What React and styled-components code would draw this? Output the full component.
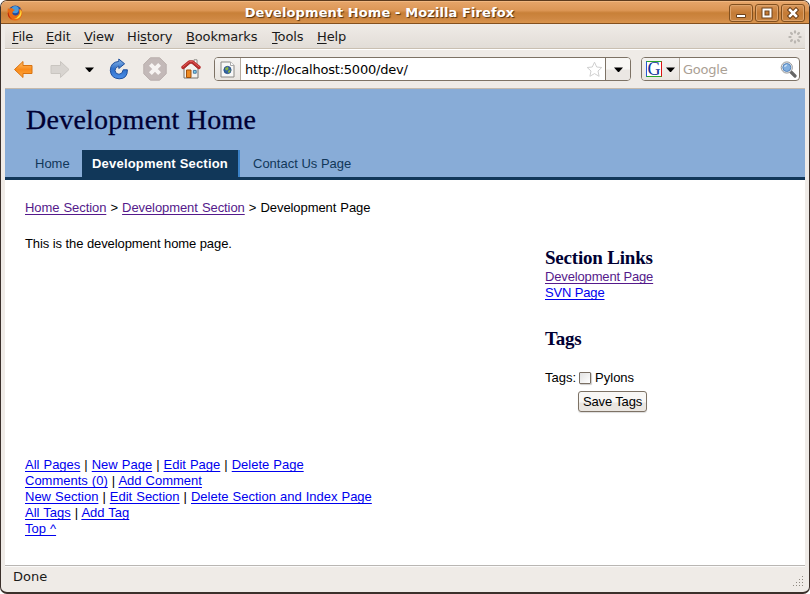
import React from "react";
import styled, { createGlobalStyle, css } from "styled-components";

const ui = '"DejaVu Sans", sans-serif';

const Global = createGlobalStyle`
  *, *::before, *::after { box-sizing: border-box; }
  body { margin: 0; background: #fff; }
`;

const Frame = styled.div`
  width: 810px;
  height: 594px;
  display: flex;
  flex-direction: column;
  overflow: hidden;
  border: 1px solid #3b302b;
  border-top-color: #5d3b1d;
  border-bottom-width: 2px;
  border-radius: 7px;
  background: #efebe7;
  font: 13px/16px ${ui};
  letter-spacing: -0.15px;
  color: #1a1a1a;
`;

const TitleBar = styled.header`
  flex: none;
  height: 23px;
  display: flex;
  align-items: center;
  padding: 0 4px 0 6px;
  border-top: 1px solid #f1b780;
  border-bottom: 1px solid #83501f;
  background: linear-gradient(#e5a468 0, #dc9655 40%, #c88038 52%, #cf8843 80%, #d9944d 100%);
`;

const Title = styled.h1`
  flex: 1;
  margin: 0;
  padding-left: 9px;
  text-align: center;
  font: bold 13px/20px ${ui};
  letter-spacing: 0.1px;
  color: #fff;
  text-shadow: 1px 1px 1px #50300f;
`;

const WindowButton = styled.button`
  flex: none;
  width: 24px;
  height: 18px;
  margin-left: 2px;
  padding: 0;
  display: grid;
  place-items: center;
  border: 1px solid #82501f;
  border-radius: 3px;
  box-shadow: inset 0 0 0 1px #dda36b;
  background: linear-gradient(#d8975b, #c47b35 50%, #c98542);
`;

const MenuBar = styled.nav`
  flex: none;
  height: 25px;
  margin: 0 4px;
  padding-top: 1px;
  display: flex;
  align-items: center;
  border-bottom: 1px solid #c9bfb1;
  background: linear-gradient(#efebe7, #e2ddd7);
`;

const MenuItem = styled.span`
  width: ${(p) => p.$w}px;
  padding-left: 7px;
  white-space: nowrap;
  u { text-underline-offset: 2px; text-decoration-thickness: 1px; }
`;

const Throbber = styled.svg`
  margin-left: auto;
  margin-right: 3px;
`;

const ToolBar = styled.div`
  flex: none;
  height: 40px;
  margin: 0 4px;
  padding: 0 4px 0 8px;
  display: flex;
  align-items: center;
  border-top: 1px solid #fff;
  border-bottom: 1px solid #c4b9ac;
`;

const ToolIcon = styled.svg`
  flex: none;
  margin-right: ${(p) => p.$gap}px;
`;

const Field = styled.div`
  flex: none;
  height: 24px;
  display: flex;
  align-items: stretch;
  overflow: hidden;
  width: ${(p) => p.$w}px;
  margin-right: ${(p) => p.$gap || 0}px;
  border: 1px solid #7d7265;
  border-radius: 4px;
  background: #fff;
`;

const FieldIcon = styled.div`
  width: ${(p) => p.$w}px;
  display: flex;
  align-items: center;
  justify-content: center;
  gap: 4px;
  border-right: 1px solid #b5aba0;
  background: linear-gradient(#f5f3f1, #e9e5e0);
`;

const FieldText = styled.span`
  flex: 1;
  padding-left: ${(p) => p.$pad}px;
  line-height: 23px;
  letter-spacing: -0.22px;
  color: ${(p) => (p.$hint ? "#aaa094" : "#000")};
`;

const FieldMark = styled.svg`
  align-self: center;
  flex: none;
  margin-right: 2px;
`;

const FieldDrop = styled.div`
  width: 25px;
  display: grid;
  place-items: center;
  border-left: 1px solid #7d7265;
  background: linear-gradient(#f8f7f5 50%, #ebe7e3 55%);
`;

const Google = styled.span`
  width: 16px;
  height: 16px;
  border: 1px solid;
  border-color: #2aa62a #d11 #2aa62a #2457d6;
  background: #fff;
  color: #10309a;
  font: 18px/14px "Liberation Serif", serif;
  text-align: center;
  display: flex;
  justify-content: center;
`;

const Viewport = styled.div`
  flex: 1;
  min-height: 0;
  margin: 0 4px;
  display: flex;
  flex-direction: column;
  background: #fff;
  font: 13px/16px "Liberation Sans", sans-serif;
  letter-spacing: 0;
  color: #000;
`;

const Banner = styled.div`
  flex: none;
  height: 91px;
  padding: 14px 20px 0;
  display: flex;
  flex-direction: column;
  justify-content: space-between;
  border-bottom: 3px solid #113759;
  background: #88acd7;
`;

const serifHeading = css`
  margin: 0;
  font-family: "Liberation Serif", serif;
  color: #000033;
`;

const PageTitle = styled.h2`
  ${serifHeading}
  padding-left: 1px;
  font-size: 28px;
  line-height: 34px;
  font-weight: normal;
  letter-spacing: 0.25px;
  -webkit-text-stroke: 0.3px #000033;
`;

const Tabs = styled.div`
  display: flex;
`;

const Tab = styled.a`
  height: 27px;
  width: ${(p) => p.$w}px;
  padding-left: 10px;
  line-height: 27px;
  white-space: nowrap;
  border-right: 2px solid transparent;
  color: #113759;
  ${(p) => p.$active && css`
    margin-right: 3px;
    color: #fff;
    font-weight: bold;
    letter-spacing: 0.2px;
    background: #113759;
    border-right-color: #3c82c8;
  `}
`;

const Crumbs = styled.p`
  margin: 0;
  padding: 20px 20px 0;
  letter-spacing: -0.08px;
  word-spacing: 0.6px;
`;

const Link = styled.a`
  color: ${(p) => (p.$visited ? "#551a8b" : "#0000ee")};
  text-decoration: underline;
  text-underline-offset: 2px;
  text-decoration-thickness: 1px;
  text-decoration-skip-ink: none;
`;

const Columns = styled.div`
  flex: none;
  height: 241px;
  padding: 20px 20px 0;
  display: grid;
  grid-template-columns: 520px 1fr;
`;

const Body = styled.p`
  margin: 0;
  letter-spacing: -0.08px;
`;

const Side = styled.aside`
  padding-top: 12px;
  display: flex;
  flex-direction: column;
  align-items: flex-start;
`;

const SideTitle = styled.h3`
  ${serifHeading}
  font-size: 19px;
  line-height: 20px;
  font-weight: bold;
  letter-spacing: -0.2px;
`;

const SideLinks = styled.div`
  display: flex;
  flex-direction: column;
  align-items: flex-start;
  padding: 1px 0 28px;
  letter-spacing: -0.15px;
`;

const TagRow = styled.label`
  margin-top: 20px;
  height: 18px;
  display: flex;
  align-items: center;
`;

const Check = styled.input`
  appearance: none;
  width: 12px;
  height: 12px;
  margin: 0 4px 0 3px;
  border: 1px solid #7a6f64;
  border-radius: 1px;
  background: linear-gradient(135deg, #e2e2e2, #fff);
  box-shadow: 1px 1px 1px #ccc;
`;

const Save = styled.button`
  width: 69px;
  height: 21px;
  margin: 4px 0 0 33px;
  padding: 0;
  border: 1px solid #7d7265;
  border-radius: 3px;
  background: linear-gradient(#f8f7f5 50%, #eae6e1 60%);
  box-shadow: 0 1px 1px #ddd;
  font: inherit;
  letter-spacing: -0.15px;
  color: #000;
`;

const Footer = styled.div`
  padding: 0 20px;
  word-spacing: 0.4px;
`;

const FooterLine = styled.div`
  height: 16px;
  white-space: pre;
`;

const StatusBar = styled.footer`
  flex: none;
  height: 27px;
  margin: 0 4px;
  padding: 0 0 0 8px;
  display: flex;
  justify-content: space-between;
  line-height: 21px;
  letter-spacing: 0;
  border-top: 1px solid #b9b6b3;
  box-shadow: inset 0 1px #fbfaf9;
`;

const Grip = styled.svg`
  align-self: flex-end;
  margin: 0 1px 5px 0;
`;

const Caret = () => (
  <svg width="9" height="5" viewBox="0 0 9 5"><path d="M0 0.5H9L5 5H4Z" fill="#000" /></svg>
);

const menus = [["", "F", "ile", 34], ["", "E", "dit", 38], ["", "V", "iew", 43], ["Hi", "s", "tory", 59], ["", "B", "ookmarks", 86], ["", "T", "ools", 45], ["", "H", "elp", 42]];

const footer = [
  ["All Pages", "New Page", "Edit Page", "Delete Page"],
  ["Comments (0)", "Add Comment"],
  ["New Section", "Edit Section", "Delete Section and Index Page"],
  ["All Tags", "Add Tag"],
  ["Top ^"],
];

const gripDots = [[9, 0], [6, 3], [9, 3], [3, 6], [6, 6], [9, 6], [0, 9], [3, 9], [6, 9], [9, 9]];

const Logo = styled.svg`
  flex: none;
`;

function FirefoxLogo() {
  return (
    <Logo width="16" height="16" viewBox="0 0 16 16">
      <circle cx="8.2" cy="7.3" r="6.8" fill="#234b9c" />
      <circle cx="8.2" cy="4.6" r="3.6" fill="#4a9bdc" />
      <path d="M1 3L2.3 4.2Q3.3 2.8 5 3L6.2 4.3L8 5L6 6.3L5.3 8.4Q6.5 10.8 9 10.4Q12.4 10 12 6L11.7 3.7Q13.2 4.4 13.4 5.4L13.6 3.2Q16 6 15.1 9.7Q13.5 15.6 7.8 15.5Q1 15.1.6 8.7Q.3 5 1 3Z" fill="#e96b12" />
      <path d="M13.6 4Q15.4 7 14.2 10Q12.3 14.4 7 13.8Q13.7 12 13.6 4Z" fill="#ffdb38" />
      <path d="M1.5 7Q1.5 12 5.5 14.5Q1 13 .7 8.5Z" fill="#b9220c" />
    </Logo>
  );
}

function Toolbar() {
  return (
    <ToolBar>
      <ToolIcon $gap={15} width="22" height="20" viewBox="0 0 22 20">
        <defs>
          <linearGradient id="orange" x2="0" y2="1"><stop stopColor="#ffc06a" /><stop offset=".5" stopColor="#f98b1b" /><stop offset="1" stopColor="#ffa940" /></linearGradient>
          <linearGradient id="blue" x2="0" y2="1"><stop stopColor="#8ab7e8" /><stop offset=".5" stopColor="#2f6fc9" /><stop offset="1" stopColor="#4c8fe8" /></linearGradient>
        </defs>
        <path d="M1.5 10.5L10 2.5V6.5H19V14.5H10V18.5Z" fill="url(#orange)" stroke="#d9720f" strokeLinejoin="round" />
      </ToolIcon>
      <ToolIcon $gap={15} width="20" height="20" viewBox="0 0 20 20">
        <path d="M19 10.5L10.5 2.5V6.5H1V14.5H10.5V18.5Z" fill="#d8d4d0" stroke="#c9c5c0" strokeLinejoin="round" />
      </ToolIcon>
      <ToolIcon $gap={15} width="9" height="5" viewBox="0 0 9 5"><path d="M0 .5H9L5 5H4Z" fill="#000" /></ToolIcon>
      <ToolIcon $gap={14} width="20" height="22" viewBox="0 0 20 22">
        <path d="M9.8 3.4V1L15.6 5.8L9.8 10.5V8.1Q6 9 6 12.6Q6.4 16.2 10 16.3Q13.7 16 14.2 11.8H18.4Q18.6 20.8 10.2 20.8Q1.8 20.4 1.3 12.3Q1.6 4.2 9.8 3.4Z" fill="url(#blue)" stroke="#1d4e9c" strokeLinejoin="round" />
      </ToolIcon>
      <ToolIcon $gap={14} width="24" height="24" viewBox="0 0 24 24">
        <path d="M7.3.8H16.7L23.2 7.3V16.7L16.7 23.2H7.3L.8 16.7V7.3Z" fill="#c3b9b8" stroke="#b9afad" />
        <path d="M7.4 7.4L16.6 16.6M16.6 7.4L7.4 16.6" stroke="#f6f3f2" strokeWidth="4" />
      </ToolIcon>
      <ToolIcon $gap={13} width="20" height="20" viewBox="0 0 20 20">
        <path d="M13 .8H16V6H13Z" fill="#fff" stroke="#8c8a86" />
        <path d="M3 9.5L10 3.5L17 9.5V19H3Z" fill="#f4f2ef" stroke="#77736d" />
        <path d="M5.5 11H10V18.5H5.5Z" fill="#ef8b22" stroke="#a3500a" />
        <path d="M12.4 11.4H15.2V14.2H12.4Z" fill="#7dd5f0" stroke="#47759d" />
        <path d="M2 8.4L8.4 3H11.6L18 8.4" fill="none" stroke="#b72a2a" strokeWidth="3.4" strokeLinecap="round" strokeLinejoin="round" />
        <path d="M2 7.8L8.4 2.6H11.6L18 7.8" fill="none" stroke="#e0605c" strokeLinecap="round" />
      </ToolIcon>
      <Field $w={417} $gap={10}>
        <FieldIcon $w={26}>
          <svg width="15" height="17" viewBox="0 0 15 17">
            <path d="M1 1H10.5L14 4.5V16H1Z" fill="#f8f8f7" stroke="#8b8985" strokeLinejoin="round" />
            <path d="M10.5 1V4.5H14" fill="#fff" stroke="#aaa" />
            <circle cx="7.5" cy="9" r="3.6" fill="#3465a4" stroke="#27518a" />
            <path d="M5 7L8 5.8L8.6 8L7 9.5L5.6 9ZM8 10L10.5 8.5L10.3 11L8.4 12Z" fill="#8db53f" />
          </svg>
        </FieldIcon>
        <FieldText $pad={4}>http://localhost:5000/dev/</FieldText>
        <FieldMark width="17" height="17" viewBox="0 0 17 17">
          <path d="M8.5 1.2L10.7 6L15.8 6.5L12 10L13.1 15.3L8.5 12.6L3.9 15.3L5 10L1.2 6.5L6.3 6Z" fill="#fff" stroke="#cfcfcf" strokeLinejoin="round" />
        </FieldMark>
        <FieldDrop><Caret /></FieldDrop>
      </Field>
      <Field $w={159}>
        <FieldIcon $w={38}><Google>G</Google><Caret /></FieldIcon>
        <FieldText $hint $pad={3}>Google</FieldText>
        <FieldMark width="17" height="17" viewBox="0 0 17 17">
          <path d="M10.5 10.5L15 15" stroke="#666" strokeWidth="3.2" strokeLinecap="round" />
          <circle cx="6.8" cy="6.5" r="5.6" fill="#eee" stroke="#999" />
          <circle cx="6.8" cy="6.5" r="4" fill="#83b0e0" stroke="#5484bd" />
          <path d="M4 6Q4.5 3.5 7.5 3.5L6 5.5Z" fill="#d7e8f8" />
        </FieldMark>
      </Field>
    </ToolBar>
  );
}

export default function App() {
  return (
    <>
      <Global />
      <Frame>
        <TitleBar>
          <FirefoxLogo />
          <Title>Development Home - Mozilla Firefox</Title>
          <WindowButton><svg width="12" height="12" viewBox="0 0 12 12"><path d="M1.5 7.5H10.5V10.5H1.5Z" fill="#fff" stroke="#6e421b" /></svg></WindowButton>
          <WindowButton><svg width="12" height="12" viewBox="0 0 12 12"><path d="M2.5 2.5H9.5V9.5H2.5Z" fill="none" stroke="#6e421b" strokeWidth="4" /><path d="M2.5 2.5H9.5V9.5H2.5Z" fill="none" stroke="#fff" strokeWidth="2" /></svg></WindowButton>
          <WindowButton><svg width="12" height="12" viewBox="0 0 12 12"><path d="M3 3L9 9M9 3L3 9" stroke="#6e421b" strokeWidth="4.6" strokeLinecap="square" /><path d="M3 3L9 9M9 3L3 9" stroke="#fff" strokeWidth="2.5" strokeLinecap="square" /></svg></WindowButton>
        </TitleBar>
        <MenuBar>
          {menus.map(([a, key, b, w]) => <MenuItem key={key} $w={w}>{a}<u>{key}</u>{b}</MenuItem>)}
          <Throbber width="14" height="14" viewBox="0 0 14 14">
            {[0, 1, 2, 3, 4, 5, 6, 7].map((i) => (
              <path key={i} d="M7 1.4V2.6" stroke="#bab6b1" strokeWidth="2.2" strokeLinecap="round" transform={`rotate(${i * 45} 7 7)`} />
            ))}
          </Throbber>
        </MenuBar>
        <Toolbar />
        <Viewport>
          <Banner>
            <PageTitle>Development Home</PageTitle>
            <Tabs>
              <Tab $w={57}>Home</Tab>
              <Tab $w={158} $active>Development Section</Tab>
              <Tab $w={130}>Contact Us Page</Tab>
            </Tabs>
          </Banner>
          <Crumbs>
            <Link $visited>Home Section</Link> &gt; <Link $visited>Development Section</Link> &gt; Development Page
          </Crumbs>
          <Columns>
            <Body>This is the development home page.</Body>
            <Side>
              <SideTitle>Section Links</SideTitle>
              <SideLinks>
                <Link $visited>Development Page</Link>
                <Link>SVN Page</Link>
              </SideLinks>
              <SideTitle>Tags</SideTitle>
              <TagRow>Tags:<Check type="checkbox" />Pylons</TagRow>
              <Save>Save Tags</Save>
            </Side>
          </Columns>
          <Footer>
            {footer.map((line) => (
              <FooterLine key={line[0]}>
                {line.map((t, i) => <React.Fragment key={t}>{i > 0 && " | "}<Link>{t}</Link></React.Fragment>)}
              </FooterLine>
            ))}
          </Footer>
        </Viewport>
        <StatusBar>
          Done
          <Grip width="11" height="11" viewBox="0 0 11 11">
            {gripDots.map(([x, y]) => <rect key={`${x}-${y}`} x={x} y={y} width="1" height="1" fill="#8f8981" />)}
          </Grip>
        </StatusBar>
      </Frame>
    </>
  );
}
